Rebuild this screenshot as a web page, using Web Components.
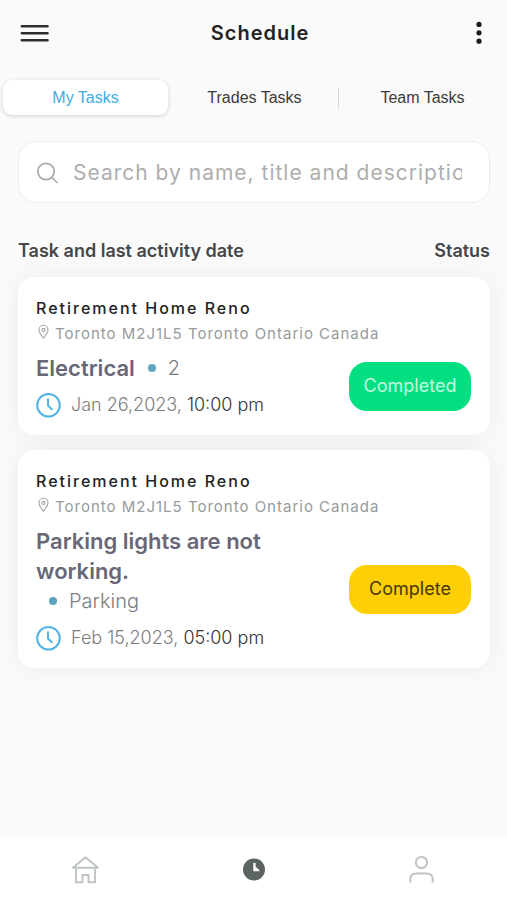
<!DOCTYPE html>
<html lang="en">
<head>
<meta charset="utf-8">
<meta name="viewport" content="width=device-width, initial-scale=1">
<title>Schedule</title>
<style>
  body { margin: 0; background: #fafafa; font-family: Inter, "Liberation Sans", sans-serif; color: #222; }
</style>
</head>
<body>
<schedule-app></schedule-app>
<script>
const define = (name, html, setup) => {
  const template = document.createElement('template');
  template.innerHTML = `<style>
    *, *::before { box-sizing: border-box; }
    button, input { font: inherit; color: inherit; border: 0; background: none; padding: 0; margin: 0; }
    button { cursor: pointer; }
    svg { display: block; flex: none; }
  </style>` + html;
  customElements.define(name, class extends HTMLElement {
    constructor() {
      super();
      this.attachShadow({ mode: 'open' }).append(template.content.cloneNode(true));
    }
    connectedCallback() { if (setup) setup(this, this.shadowRoot); }
  });
};

define('app-header', `
  <style>
    :host { display: flex; justify-content: space-between; align-items: center; height: 66px; padding: 0 20px; }
    h1 { margin: 0; font-size: 20px; line-height: 24px; font-weight: 600; letter-spacing: 1px; color: #222; }
  </style>
  <button aria-label="Menu">
    <svg width="29" height="24" viewBox="0 0 29 24" stroke="#2c2c2c" stroke-width="2.4" stroke-linecap="round"><path d="M1.800 5.200H27.600M1.800 12.200H27.600M1.800 19.300H27.600"/></svg>
  </button>
  <h1><slot></slot></h1>
  <button aria-label="More options">
    <svg width="16" height="26" viewBox="0 0 16 26" fill="#1c1c1c"><circle cx="8" cy="4.400" r="2.600"/><circle cx="8" cy="12.800" r="2.600"/><circle cx="8" cy="21.200" r="2.600"/></svg>
  </button>
`);

define('task-tab', `
  <style>
    :host { display: flex; align-items: center; padding: 0 1px 0 3px; }
    :host([divided])::before { content: ""; width: 1px; height: 22px; margin-left: -3px; background: #d8d8d8; }
    button { flex: 1; height: 35px; border-radius: 9px; font: 16px/20px "Liberation Sans", Arial, sans-serif; color: #3a3a3a; }
    :host([active]) button { background: #fff; color: #43ace0; box-shadow: 0 1px 4px rgba(0,0,0,.16); }
  </style>
  <button role="tab"><slot></slot></button>
`, (host, root) => root.querySelector('button').setAttribute('aria-selected', host.hasAttribute('active')));

define('task-tabs', `
  <style>:host { display: grid; grid-template-columns: repeat(3, 1fr); margin-top: 14px; }</style>
  <slot></slot>
`);

define('search-field', `
  <style>
    :host { display: block; margin: 26px 17px 0 18px; }
    label { display: flex; align-items: center; gap: 14px; height: 62px; padding: 0 27px 0 17px; border: 1px solid #ececec; border-radius: 18px; background: #fff; }
    input { flex: 1; min-width: 0; height: 30px; outline: none; font-size: 21px; letter-spacing: 1px; color: #333; }
    input::placeholder { color: #aeaeae; opacity: 1; }
  </style>
  <label>
    <svg width="23" height="23" viewBox="0 0 23 23" fill="none" stroke="#a9a9a9" stroke-width="1.700" stroke-linecap="round"><circle cx="10" cy="10.500" r="8.200"/><path d="M16 16.500L21 21.500"/></svg>
    <input type="text" aria-label="Search tasks" placeholder="Search by name, title and description">
  </label>
`);

define('list-heading', `
  <style>
    :host { display: flex; justify-content: space-between; margin: 36px 17px 0 18px; font-size: 18px; line-height: 24px; font-weight: 600; color: #464749; }
  </style>
  <slot></slot>
`);

define('status-button', `
  <style>
    :host { display: block; flex: none; }
    button { width: 122px; height: 49px; border-radius: 18px; background: #ffcf05; color: #45360a; font-size: 18px; line-height: 24px; }
    :host([done]) button { background: #02df81; color: #c4fbe1; }
  </style>
  <button><slot></slot></button>
`);

define('task-card', `
  <style>
    :host { display: block; padding: 18px 19px 16px 18px; border-radius: 16px; background: #fff; box-shadow: 0 0 26px rgba(0,0,0,.06); }
    h2 { margin: 0; font-size: 16px; line-height: 26px; font-weight: 500; letter-spacing: 2px; color: #222; }
    .address { display: flex; align-items: center; gap: 4px; font-size: 15px; line-height: 26px; letter-spacing: 1px; color: #969b9b; }
    .pin { margin-bottom: 4px; }
    .body { display: flex; align-items: center; gap: 20px; margin-top: 6px; }
    .info { flex: 1; min-width: 0; }
    .task { display: flex; flex-wrap: wrap; font-size: 20px; line-height: 30px; }
    h3 { margin: 0; font-size: 22px; font-weight: 600; color: #686778; }
    .kind { display: flex; align-items: center; gap: 12px; padding-left: 13px; color: #7c7c80; font-weight: 300; }
    .kind::before { content: ""; width: 8px; height: 8px; border-radius: 50%; background: #5ba3c0; }
    .date { display: flex; align-items: center; margin-top: 8px; font-size: 18px; line-height: 28px; color: #7c7c80; font-weight: 300; }
    .clock { margin-right: 10px; }
    time { display: flex; gap: 5px; }
    .hour { color: #333; }
  </style>
  <h2><slot name="project"></slot></h2>
  <div class="address">
    <svg class="pin" width="15" height="16" viewBox="0 0 15 16" fill="none" stroke="#a0a3a3" stroke-width="1.100"><path d="M7.500 14.200C5.400 11.300 3 8.500 3 5.900a4.500 4.700 0 0 1 9 0C12 8.500 9.600 11.300 7.500 14.200Z"/><circle cx="7.500" cy="5.900" r="1.500"/></svg>
    <slot name="address"></slot>
  </div>
  <div class="body">
    <div class="info">
      <div class="task"><h3><slot name="task"></slot></h3><span class="kind"><slot name="kind"></slot></span></div>
      <div class="date">
        <svg class="clock" width="25" height="26" viewBox="0 0 25 26" fill="none" stroke="#51b5e5" stroke-width="2" stroke-linecap="round" stroke-linejoin="round"><circle cx="12.500" cy="13.300" r="11.300"/><path d="M12 7.300V13.500L15.800 17.300"/></svg>
        <time><slot name="day"></slot><span class="hour"><slot name="hour"></slot></span></time>
      </div>
    </div>
    <slot name="status"></slot>
  </div>
`);

define('bottom-nav', `
  <style>
    :host { display: block; background: #fff; }
    nav { display: grid; grid-template-columns: repeat(3, 1fr); justify-items: center; align-items: center; height: 63px; padding-top: 3px; }
    a { display: block; }
  </style>
  <nav aria-label="Main">
    <a href="#home" aria-label="Home"><svg width="28" height="30" viewBox="0 0 28 30" fill="none" stroke="#bec4c2" stroke-width="1.900" stroke-linejoin="round"><path d="M14.500 2.200L27 12.800H2ZM5 12.800V27.200H11.500V20H17.500V27.200H24V12.800"/></svg></a>
    <a href="#schedule" aria-label="Schedule" aria-current="page"><svg width="24" height="24" viewBox="0 0 24 24"><circle cx="12" cy="11.500" r="11" fill="#5b6461"/><path d="M11.300 4.700L13.600 5.100V8.800L17.300 12V13.300H11.300Z" fill="#fff"/></svg></a>
    <a href="#profile" aria-label="Profile"><svg width="28" height="30" viewBox="0 0 28 30" fill="none" stroke="#bec4c2" stroke-width="2"><circle cx="12.500" cy="7.500" r="5.600"/><path d="M1.300 27.500V24C1.300 20.500 3.500 18.500 7 18.500H18C21.500 18.500 23.700 20.500 23.700 24V27.500"/></svg></a>
  </nav>
`);

define('schedule-app', `
  <style>
    :host { display: flex; flex-direction: column; min-height: 100vh; }
    main { flex: 1; }
    .list { display: grid; gap: 15px; margin: 14px 17px 24px 18px; }
  </style>
  <app-header>Schedule</app-header>
  <main>
    <task-tabs role="tablist">
      <task-tab active>My Tasks</task-tab>
      <task-tab>Trades Tasks</task-tab>
      <task-tab divided>Team Tasks</task-tab>
    </task-tabs>
    <search-field></search-field>
    <list-heading><span>Task and last activity date</span><span>Status</span></list-heading>
    <div class="list">
      <task-card>
        <span slot="project">Retirement Home Reno</span>
        <span slot="address">Toronto M2J1L5 Toronto Ontario Canada</span>
        <span slot="task">Electrical</span>
        <span slot="kind">2</span>
        <span slot="day">Jan 26,2023,</span>
        <span slot="hour">10:00 pm</span>
        <status-button slot="status" done>Completed</status-button>
      </task-card>
      <task-card>
        <span slot="project">Retirement Home Reno</span>
        <span slot="address">Toronto M2J1L5 Toronto Ontario Canada</span>
        <span slot="task">Parking lights are not working.</span>
        <span slot="kind">Parking</span>
        <span slot="day">Feb 15,2023,</span>
        <span slot="hour">05:00 pm</span>
        <status-button slot="status">Complete</status-button>
      </task-card>
    </div>
  </main>
  <bottom-nav></bottom-nav>
`);
</script>
</body>
</html>
